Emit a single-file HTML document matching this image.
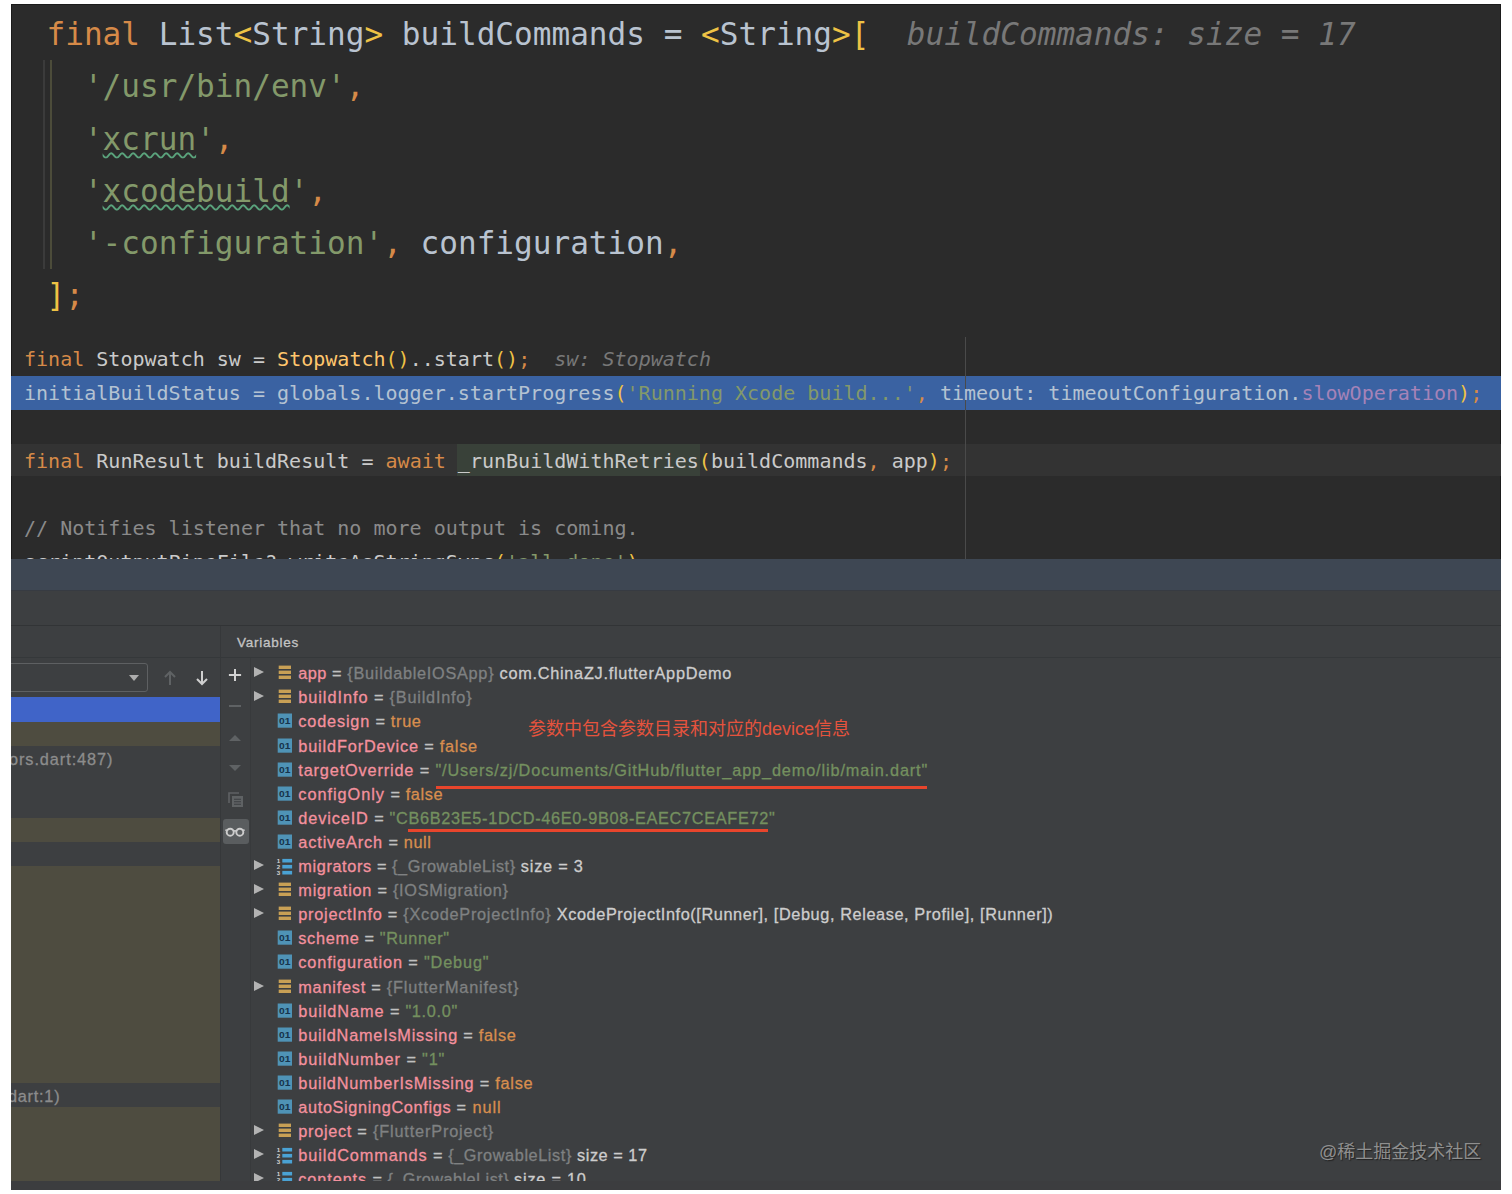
<!DOCTYPE html>
<html lang="zh">
<head>
<meta charset="utf-8">
<title>debug</title>
<style>
html,body{margin:0;padding:0;background:#fff;}
body{width:1512px;height:1194px;position:relative;overflow:hidden;font-family:"Liberation Sans","Noto Sans CJK SC",sans-serif;}
#frame{position:absolute;left:11px;top:4px;width:1490px;height:1186px;background:#2b2b2b;overflow:hidden;}
#edge{position:absolute;left:0;top:0;width:1490px;height:555px;box-sizing:border-box;border:1px solid #1b1b1b;border-bottom:0;pointer-events:none;}
.abs{position:absolute;}
/* ---------- code ---------- */
.code{font-family:"DejaVu Sans Mono","Liberation Mono",monospace;color:#b9c3d0;white-space:pre;position:absolute;left:0;margin:0;}
.c1{font-size:31.07px;line-height:52px;height:52px;}
.c2{font-size:20.03px;line-height:34px;height:34px;}
.k{color:#d68a48}.s{color:#83996a}.b{color:#eec245}.f{color:#ffc66d}.p{color:#a583b8}.cm{color:#8a8a8a}
.d2{color:#cacaca}.hl2{color:#b4c2d2}
.h{color:#787878;font-style:italic}
.wav{text-decoration:underline wavy #5aa37c;text-decoration-thickness:1.5px;text-underline-offset:2px;}

/* ---------- debug panel ---------- */
#dbg{position:absolute;left:0;top:555px;width:1490px;height:631px;background:#3d3f41;overflow:hidden;font-size:16.3px;color:#c0c0c0;-webkit-text-stroke:0.3px;}
.row{position:absolute;left:0;height:24px;line-height:24px;white-space:pre;}
.row .t{position:absolute;left:287.3px;top:0;}
.n{color:#f4919e}.g{color:#7f8182}.v{color:#cdcdcd}.o{color:#d88e4e}.gs{color:#74905f}
.tri{position:absolute;left:243.4px;top:6px;width:0;height:0;border-left:10px solid #b2b2b2;border-top:5.6px solid transparent;border-bottom:5.6px solid transparent;}
.ic{position:absolute;left:266px;top:4px;width:15px;height:15px;}
.fr{position:absolute;left:0;width:209px;height:24.1px;}
</style>
</head>
<body>
<div id="frame">
<div id="edge"></div>
<!-- top code block -->
<div class="abs" style="left:32px;top:55.5px;width:2px;height:209px;background:#3b3b3b"></div>
<div class="abs" style="left:39.2px;top:55.5px;width:2px;height:209px;background:#4c4c3a"></div>
<div class="code c1" style="left:35.5px;top:4.0px"><span class="k">final</span> List<span class="b">&lt;</span>String<span class="b">&gt;</span> buildCommands = <span class="b">&lt;</span>String<span class="b">&gt;[</span>  <span class="h">buildCommands: size = 17</span></div>
<div class="code c1" style="left:35.5px;top:56.2px">  <span class="s">'/usr/bin/env'</span><span class="k">,</span></div>
<div class="code c1" style="left:35.5px;top:108.5px">  <span class="s">'<span class="wav">xcrun</span>'</span><span class="k">,</span></div>
<div class="code c1" style="left:35.5px;top:160.8px">  <span class="s">'<span class="wav">xcodebuild</span>'</span><span class="k">,</span></div>
<div class="code c1" style="left:35.5px;top:213.0px">  <span class="s">'-configuration'</span><span class="k">,</span> configuration<span class="k">,</span></div>
<div class="code c1" style="left:35.5px;top:265.2px"><span class="b">]</span><span class="k">;</span></div>

<!-- second code block -->
<div class="abs" id="code2" style="left:0;top:331px;width:1490px;height:224px;overflow:hidden">
<div class="abs" style="left:0;top:41px;width:1490px;height:33.5px;background:#3a62a2"></div>
<div class="abs" style="left:0;top:108.5px;width:1490px;height:32.5px;background:#333333"></div>
<div class="abs" style="left:446.4px;top:108.5px;width:243px;height:32.5px;background:#394139"></div>
<div class="abs" style="left:954px;top:2px;width:1px;height:222px;background:#4a4a4a"></div>
<div class="code c2 d2" style="left:13px;top:7.1px"><span class="k">final</span> Stopwatch sw = <span class="f">Stopwatch</span><span class="b">()</span>..start<span class="b">()</span><span class="k">;</span>  <span class="h">sw: Stopwatch</span></div>
<div class="code c2 hl2" style="left:13px;top:40.9px">initialBuildStatus = globals.logger.startProgress<span class="b">(</span><span class="s">'Running Xcode build...'</span><span class="k">,</span> timeout: timeoutConfiguration.<span class="p">slowOperation</span><span class="b">)</span><span class="k">;</span></div>
<div class="code c2 d2" style="left:13px;top:108.6px"><span class="k">final</span> RunResult buildResult = <span class="k">await</span> _runBuildWithRetries<span class="b">(</span>buildCommands<span class="k">,</span> app<span class="b">)</span><span class="k">;</span></div>
<div class="code c2 cm" style="left:13px;top:176.2px">// Notifies listener that no more output is coming.</div>
<div class="code c2 d2" style="left:13px;top:210.1px">scriptOutputPipeFile?.writeAsStringSync<span class="b">(</span><span class="s">'all done'</span><span class="b">)</span><span class="k">;</span></div>
</div>
<!-- debug panel -->
<div id="dbg">
<div class="abs" style="left:0;top:0;width:1490px;height:32px;background:#3e4753;border-bottom:1px solid #373b42;box-sizing:border-box"></div>
<div class="abs" style="left:0;top:66px;width:1490px;height:1px;background:#323436"></div>
<div class="abs" style="left:209px;top:67px;width:1px;height:560px;background:#36383a"></div>
<div class="abs" style="left:0;top:98px;width:1490px;height:1px;background:#35383a"></div>
<div class="abs" style="left:239px;top:99px;width:1px;height:530px;background:#383a3c"></div>
<div class="abs" style="left:226px;top:74px;font-size:13.5px;letter-spacing:0.75px;line-height:20px;color:#c4c4c4">Variables</div>
<div class="fr" style="top:138.0px;height:25.0px;background:#4064c8"></div>
<div class="fr" style="top:163.0px;height:24.0px;background:#4e4c40"></div>
<div class="fr" style="top:259.0px;height:24.0px;background:#4e4c40"></div>
<div class="fr" style="top:307.0px;height:217.0px;background:#4e4c40"></div>
<div class="fr" style="top:548.0px;height:97.0px;background:#4e4c40"></div>
<div class="row" style="top:102.2px"><i class="tri"></i><svg class="ic" viewBox="0 0 15 15"><rect x="1.7" y="0.6" width="12.3" height="3.4" fill="#c8a055"/><rect x="1.7" y="5.6" width="12.3" height="3.4" fill="#c8a055"/><rect x="1.7" y="10.6" width="12.3" height="3.4" fill="#c8a055"/></svg><span class="t"><span class="n" style="letter-spacing:0.47px">app </span><span style="letter-spacing:0.71px">= <span class="g">{BuildableIOSApp}</span> </span><span class="v" style="letter-spacing:0.73px">com.ChinaZJ.flutterAppDemo</span></span></div>
<div class="row" style="top:126.3px"><i class="tri"></i><svg class="ic" viewBox="0 0 15 15"><rect x="1.7" y="0.6" width="12.3" height="3.4" fill="#c8a055"/><rect x="1.7" y="5.6" width="12.3" height="3.4" fill="#c8a055"/><rect x="1.7" y="10.6" width="12.3" height="3.4" fill="#c8a055"/></svg><span class="t"><span class="n" style="letter-spacing:0.95px">buildInfo </span><span style="letter-spacing:0.79px">= <span class="g">{BuildInfo}</span></span></span></div>
<div class="row" style="top:150.4px"><svg class="ic" viewBox="0 0 15 15"><rect x="0.7" y="0.5" width="14.3" height="14.2" fill="#4f93b6"/><text transform="translate(7.8 10.6) scale(1.22 1)" x="0" y="0" font-family="Liberation Sans,sans-serif" font-size="8.4" font-weight="bold" text-anchor="middle" fill="#17344c" style="-webkit-text-stroke:0">01</text></svg><span class="t"><span class="n" style="letter-spacing:0.83px">codesign </span><span style="letter-spacing:0.67px">= <span class="o">true</span></span></span></div>
<div class="row" style="top:174.5px"><svg class="ic" viewBox="0 0 15 15"><rect x="0.7" y="0.5" width="14.3" height="14.2" fill="#4f93b6"/><text transform="translate(7.8 10.6) scale(1.22 1)" x="0" y="0" font-family="Liberation Sans,sans-serif" font-size="8.4" font-weight="bold" text-anchor="middle" fill="#17344c" style="-webkit-text-stroke:0">01</text></svg><span class="t"><span class="n" style="letter-spacing:0.85px">buildForDevice </span><span style="letter-spacing:0.75px">= <span class="o">false</span></span></span></div>
<div class="row" style="top:198.6px"><svg class="ic" viewBox="0 0 15 15"><rect x="0.7" y="0.5" width="14.3" height="14.2" fill="#4f93b6"/><text transform="translate(7.8 10.6) scale(1.22 1)" x="0" y="0" font-family="Liberation Sans,sans-serif" font-size="8.4" font-weight="bold" text-anchor="middle" fill="#17344c" style="-webkit-text-stroke:0">01</text></svg><span class="t"><span class="n" style="letter-spacing:0.85px">targetOverride </span><span style="letter-spacing:0.87px">= <span class="gs">"/Users/zj/Documents/GitHub/flutter_app_demo/lib/main.dart"</span></span></span></div>
<div class="row" style="top:222.7px"><svg class="ic" viewBox="0 0 15 15"><rect x="0.7" y="0.5" width="14.3" height="14.2" fill="#4f93b6"/><text transform="translate(7.8 10.6) scale(1.22 1)" x="0" y="0" font-family="Liberation Sans,sans-serif" font-size="8.4" font-weight="bold" text-anchor="middle" fill="#17344c" style="-webkit-text-stroke:0">01</text></svg><span class="t"><span class="n" style="letter-spacing:0.97px">configOnly </span><span style="letter-spacing:0.61px">= <span class="o">false</span></span></span></div>
<div class="row" style="top:246.8px"><svg class="ic" viewBox="0 0 15 15"><rect x="0.7" y="0.5" width="14.3" height="14.2" fill="#4f93b6"/><text transform="translate(7.8 10.6) scale(1.22 1)" x="0" y="0" font-family="Liberation Sans,sans-serif" font-size="8.4" font-weight="bold" text-anchor="middle" fill="#17344c" style="-webkit-text-stroke:0">01</text></svg><span class="t"><span class="n" style="letter-spacing:0.89px">deviceID </span><span style="letter-spacing:0.68px">= <span class="gs">"CB6B23E5-1DCD-46E0-9B08-EAEC7CEAFE72"</span></span></span></div>
<div class="row" style="top:270.9px"><svg class="ic" viewBox="0 0 15 15"><rect x="0.7" y="0.5" width="14.3" height="14.2" fill="#4f93b6"/><text transform="translate(7.8 10.6) scale(1.22 1)" x="0" y="0" font-family="Liberation Sans,sans-serif" font-size="8.4" font-weight="bold" text-anchor="middle" fill="#17344c" style="-webkit-text-stroke:0">01</text></svg><span class="t"><span class="n" style="letter-spacing:0.87px">activeArch </span><span style="letter-spacing:0.64px">= <span class="o">null</span></span></span></div>
<div class="row" style="top:295.0px"><i class="tri"></i><svg class="ic" style="left:265px;top:3.5px;width:17px;height:17px" viewBox="0 0 17 17"><rect x="6.3" y="0.9" width="9.8" height="3.6" fill="#4aa2d4"/><rect x="6.3" y="6.9" width="9.8" height="3.6" fill="#4aa2d4"/><rect x="6.3" y="12.9" width="9.8" height="3.6" fill="#4aa2d4"/><g font-family="Liberation Sans,sans-serif" font-size="6.2" font-weight="bold" text-anchor="middle" fill="#d4d4d4" style="-webkit-text-stroke:0"><text x="2.4" y="4.9">1</text><text x="2.4" y="10.9">2</text><text x="2.4" y="16.9">3</text></g></svg><span class="t"><span class="n" style="letter-spacing:0.62px">migrators </span><span style="letter-spacing:0.58px">= <span class="g">{_GrowableList}</span> </span><span class="v" style="letter-spacing:0.78px">size = 3</span></span></div>
<div class="row" style="top:319.1px"><i class="tri"></i><svg class="ic" viewBox="0 0 15 15"><rect x="1.7" y="0.6" width="12.3" height="3.4" fill="#c8a055"/><rect x="1.7" y="5.6" width="12.3" height="3.4" fill="#c8a055"/><rect x="1.7" y="10.6" width="12.3" height="3.4" fill="#c8a055"/></svg><span class="t"><span class="n" style="letter-spacing:0.77px">migration </span><span style="letter-spacing:0.7px">= <span class="g">{IOSMigration}</span></span></span></div>
<div class="row" style="top:343.2px"><i class="tri"></i><svg class="ic" viewBox="0 0 15 15"><rect x="1.7" y="0.6" width="12.3" height="3.4" fill="#c8a055"/><rect x="1.7" y="5.6" width="12.3" height="3.4" fill="#c8a055"/><rect x="1.7" y="10.6" width="12.3" height="3.4" fill="#c8a055"/></svg><span class="t"><span class="n" style="letter-spacing:0.74px">projectInfo </span><span style="letter-spacing:0.74px">= <span class="g">{XcodeProjectInfo}</span> </span><span class="v" style="letter-spacing:0.6px">XcodeProjectInfo([Runner], [Debug, Release, Profile], [Runner])</span></span></div>
<div class="row" style="top:367.3px"><svg class="ic" viewBox="0 0 15 15"><rect x="0.7" y="0.5" width="14.3" height="14.2" fill="#4f93b6"/><text transform="translate(7.8 10.6) scale(1.22 1)" x="0" y="0" font-family="Liberation Sans,sans-serif" font-size="8.4" font-weight="bold" text-anchor="middle" fill="#17344c" style="-webkit-text-stroke:0">01</text></svg><span class="t"><span class="n" style="letter-spacing:0.68px">scheme </span><span style="letter-spacing:0.6px">= <span class="gs">"Runner"</span></span></span></div>
<div class="row" style="top:391.4px"><svg class="ic" viewBox="0 0 15 15"><rect x="0.7" y="0.5" width="14.3" height="14.2" fill="#4f93b6"/><text transform="translate(7.8 10.6) scale(1.22 1)" x="0" y="0" font-family="Liberation Sans,sans-serif" font-size="8.4" font-weight="bold" text-anchor="middle" fill="#17344c" style="-webkit-text-stroke:0">01</text></svg><span class="t"><span class="n" style="letter-spacing:0.87px">configuration </span><span style="letter-spacing:0.85px">= <span class="gs">"Debug"</span></span></span></div>
<div class="row" style="top:415.5px"><i class="tri"></i><svg class="ic" viewBox="0 0 15 15"><rect x="1.7" y="0.6" width="12.3" height="3.4" fill="#c8a055"/><rect x="1.7" y="5.6" width="12.3" height="3.4" fill="#c8a055"/><rect x="1.7" y="10.6" width="12.3" height="3.4" fill="#c8a055"/></svg><span class="t"><span class="n" style="letter-spacing:0.76px">manifest </span><span style="letter-spacing:0.81px">= <span class="g">{FlutterManifest}</span></span></span></div>
<div class="row" style="top:439.6px"><svg class="ic" viewBox="0 0 15 15"><rect x="0.7" y="0.5" width="14.3" height="14.2" fill="#4f93b6"/><text transform="translate(7.8 10.6) scale(1.22 1)" x="0" y="0" font-family="Liberation Sans,sans-serif" font-size="8.4" font-weight="bold" text-anchor="middle" fill="#17344c" style="-webkit-text-stroke:0">01</text></svg><span class="t"><span class="n" style="letter-spacing:0.93px">buildName </span><span style="letter-spacing:0.69px">= <span class="gs">"1.0.0"</span></span></span></div>
<div class="row" style="top:463.7px"><svg class="ic" viewBox="0 0 15 15"><rect x="0.7" y="0.5" width="14.3" height="14.2" fill="#4f93b6"/><text transform="translate(7.8 10.6) scale(1.22 1)" x="0" y="0" font-family="Liberation Sans,sans-serif" font-size="8.4" font-weight="bold" text-anchor="middle" fill="#17344c" style="-webkit-text-stroke:0">01</text></svg><span class="t"><span class="n" style="letter-spacing:0.78px">buildNameIsMissing </span><span style="letter-spacing:0.67px">= <span class="o">false</span></span></span></div>
<div class="row" style="top:487.8px"><svg class="ic" viewBox="0 0 15 15"><rect x="0.7" y="0.5" width="14.3" height="14.2" fill="#4f93b6"/><text transform="translate(7.8 10.6) scale(1.22 1)" x="0" y="0" font-family="Liberation Sans,sans-serif" font-size="8.4" font-weight="bold" text-anchor="middle" fill="#17344c" style="-webkit-text-stroke:0">01</text></svg><span class="t"><span class="n" style="letter-spacing:0.94px">buildNumber </span><span style="letter-spacing:0.83px">= <span class="gs">"1"</span></span></span></div>
<div class="row" style="top:511.9px"><svg class="ic" viewBox="0 0 15 15"><rect x="0.7" y="0.5" width="14.3" height="14.2" fill="#4f93b6"/><text transform="translate(7.8 10.6) scale(1.22 1)" x="0" y="0" font-family="Liberation Sans,sans-serif" font-size="8.4" font-weight="bold" text-anchor="middle" fill="#17344c" style="-webkit-text-stroke:0">01</text></svg><span class="t"><span class="n" style="letter-spacing:0.8px">buildNumberIsMissing </span><span style="letter-spacing:0.73px">= <span class="o">false</span></span></span></div>
<div class="row" style="top:536.0px"><svg class="ic" viewBox="0 0 15 15"><rect x="0.7" y="0.5" width="14.3" height="14.2" fill="#4f93b6"/><text transform="translate(7.8 10.6) scale(1.22 1)" x="0" y="0" font-family="Liberation Sans,sans-serif" font-size="8.4" font-weight="bold" text-anchor="middle" fill="#17344c" style="-webkit-text-stroke:0">01</text></svg><span class="t"><span class="n" style="letter-spacing:0.65px">autoSigningConfigs </span><span style="letter-spacing:0.97px">= <span class="o">null</span></span></span></div>
<div class="row" style="top:560.1px"><i class="tri"></i><svg class="ic" viewBox="0 0 15 15"><rect x="1.7" y="0.6" width="12.3" height="3.4" fill="#c8a055"/><rect x="1.7" y="5.6" width="12.3" height="3.4" fill="#c8a055"/><rect x="1.7" y="10.6" width="12.3" height="3.4" fill="#c8a055"/></svg><span class="t"><span class="n" style="letter-spacing:0.69px">project </span><span style="letter-spacing:0.84px">= <span class="g">{FlutterProject}</span></span></span></div>
<div class="row" style="top:584.2px"><i class="tri"></i><svg class="ic" style="left:265px;top:3.5px;width:17px;height:17px" viewBox="0 0 17 17"><rect x="6.3" y="0.9" width="9.8" height="3.6" fill="#4aa2d4"/><rect x="6.3" y="6.9" width="9.8" height="3.6" fill="#4aa2d4"/><rect x="6.3" y="12.9" width="9.8" height="3.6" fill="#4aa2d4"/><g font-family="Liberation Sans,sans-serif" font-size="6.2" font-weight="bold" text-anchor="middle" fill="#d4d4d4" style="-webkit-text-stroke:0"><text x="2.4" y="4.9">1</text><text x="2.4" y="10.9">2</text><text x="2.4" y="16.9">3</text></g></svg><span class="t"><span class="n" style="letter-spacing:0.89px">buildCommands </span><span style="letter-spacing:0.59px">= <span class="g">{_GrowableList}</span> </span><span class="v" style="letter-spacing:0.53px">size = 17</span></span></div>
<div class="row" style="top:608.3px"><i class="tri"></i><svg class="ic" style="left:265px;top:3.5px;width:17px;height:17px" viewBox="0 0 17 17"><rect x="6.3" y="0.9" width="9.8" height="3.6" fill="#4aa2d4"/><rect x="6.3" y="6.9" width="9.8" height="3.6" fill="#4aa2d4"/><rect x="6.3" y="12.9" width="9.8" height="3.6" fill="#4aa2d4"/><g font-family="Liberation Sans,sans-serif" font-size="6.2" font-weight="bold" text-anchor="middle" fill="#d4d4d4" style="-webkit-text-stroke:0"><text x="2.4" y="4.9">1</text><text x="2.4" y="10.9">2</text><text x="2.4" y="16.9">3</text></g></svg><span class="t"><span class="n" style="letter-spacing:0.9px">contents </span><span style="letter-spacing:0.45px">= <span class="g">{_GrowableList}</span> </span><span class="v" style="letter-spacing:0.77px">size = 10</span></span></div>
<div class="abs" style="left:-6px;top:103.6px;width:141.3px;height:27px;border:1px solid #5e6062;border-radius:3px;box-sizing:content-box"></div>
<div class="abs" style="left:118.3px;top:115.5px;width:0;height:0;border-top:6.5px solid #adadad;border-left:5.3px solid transparent;border-right:5.3px solid transparent"></div>
<svg class="abs" style="left:152.2px;top:110.5px" width="14" height="16" viewBox="0 0 14 16"><path d="M7 15 V2 M2 7 L7 2 L12 7" fill="none" stroke="#5f6264" stroke-width="2"/></svg>
<svg class="abs" style="left:183.7px;top:110.8px" width="14" height="16" viewBox="0 0 14 16"><path d="M7 1 V14 M2 9 L7 14 L12 9" fill="none" stroke="#cfcfcf" stroke-width="2"/></svg>
<svg class="abs" style="left:217.4px;top:108.6px" width="14" height="14" viewBox="0 0 14 14"><path d="M7 0.9 V13.1 M0.9 7 H13.1" stroke="#d2d2d2" stroke-width="2" fill="none"/></svg>
<div class="abs" style="left:218.3px;top:145.8px;width:12.2px;height:2px;background:#5f6264"></div>
<div class="abs" style="left:217.7px;top:175.6px;width:0;height:0;border-bottom:6.7px solid #5f6264;border-left:6.7px solid transparent;border-right:6.7px solid transparent"></div>
<div class="abs" style="left:217.7px;top:206.0px;width:0;height:0;border-top:6.7px solid #5f6264;border-left:6.7px solid transparent;border-right:6.7px solid transparent"></div>
<svg class="abs" style="left:217.2px;top:232.8px" width="16" height="16" viewBox="0 0 16 16"><path d="M1 11 V1 H11" fill="none" stroke="#5f6264" stroke-width="1.6"/><rect x="4" y="4" width="11" height="11" fill="#5f6264"/><path d="M6 7.2 H13 M6 9.7 H13 M6 12.2 H13" stroke="#3c3f41" stroke-width="1.1"/></svg>
<div class="abs" style="left:211.5px;top:260.0px;width:26.3px;height:25px;background:#5a5d5f;border-radius:3px"></div>
<svg class="abs" style="left:214.4px;top:266.9px" width="20" height="12" viewBox="0 0 20 12"><circle cx="5.2" cy="6.2" r="3.5" fill="none" stroke="#cdcdcd" stroke-width="1.9"/><circle cx="14.8" cy="6.2" r="3.5" fill="none" stroke="#cdcdcd" stroke-width="1.9"/><path d="M8.4 5.4 Q10 4.2 11.6 5.4 M1.6 4.6 L0.5 3.6 M18.4 4.6 L19.5 3.6" fill="none" stroke="#cdcdcd" stroke-width="1.5"/></svg>
<div class="abs" style="left:-2px;top:187.5px;line-height:24px;letter-spacing:0.93px;color:#8c8c8c;white-space:pre">ors.dart:487)</div>
<div class="abs" style="left:-3px;top:524.9px;line-height:24px;letter-spacing:0.75px;color:#8c8c8c;white-space:pre">dart:1)</div>
<div class="abs" style="left:516.9px;top:158.0px;font-size:18px;line-height:24px;color:#e5533d;-webkit-text-stroke:0;white-space:pre">参数中包含参数目录和对应的device信息</div>
<div class="abs" style="left:424.8px;top:226.8px;width:491.0px;height:3px;background:#e8452c"></div>
<div class="abs" style="left:397.0px;top:270.0px;width:359.8px;height:3px;background:#e8452c"></div>
<div class="abs" style="left:1308.0px;top:581.0px;font-size:18px;line-height:24px;color:#8f8f8f;-webkit-text-stroke:0;text-shadow:1px 1px 1px #222;white-space:pre">@稀土掘金技术社区</div>
<div class="abs" style="left:0;top:621.5px;width:1490px;height:12px;background:#3c3d3f"></div>
</div>
</div>
</body>
</html>
